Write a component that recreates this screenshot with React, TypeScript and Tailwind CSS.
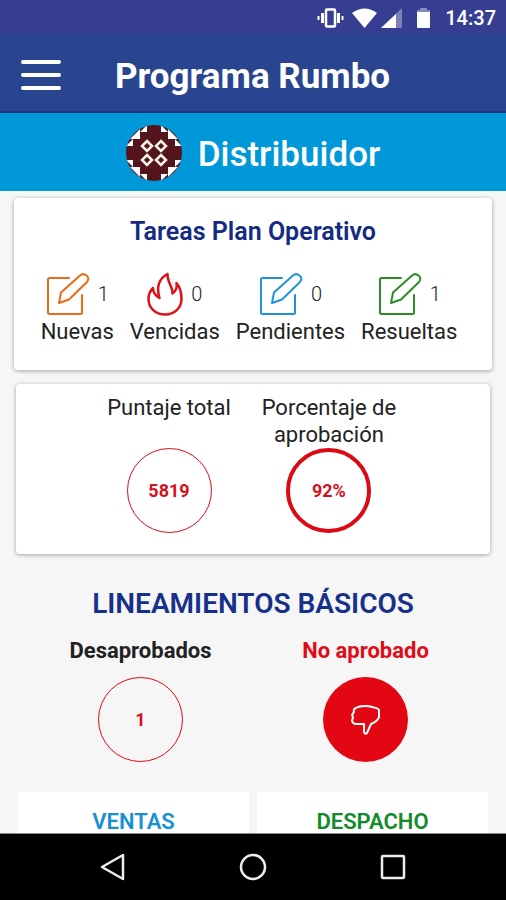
import type { ReactNode } from "react";

function EditIcon() {
  return (
    <svg width="44" height="44" viewBox="0 0 44 44" fill="none" stroke="currentColor" strokeWidth="2" strokeLinecap="round" strokeLinejoin="round" aria-hidden="true">
      <path d="M23 6H3.500Q2 6 2 7.500V40.500Q2 42 3.500 42H34.500Q36 42 36 40.500V23" />
      <path d="M13 31L15 20.500L34 3.500C38 0 45 5 41 10L23 27.500Z" />
    </svg>
  );
}

function FlameIcon() {
  return (
    <svg width="36" height="44" viewBox="0 0 36 44" fill="none" stroke="currentColor" strokeWidth="2.500" strokeLinejoin="round" aria-hidden="true">
      <path d="M20.500 2C13 6 9 14 12.500 26C9 24 6 21 6 16C3 19 1.500 22 1.500 27C1.500 36 8.500 42.500 18 42.500C27.500 42.500 34.500 36 34.500 27C34.500 20 33 15 29.500 11C30.500 16 29 19 25.500 21.500C26 15 20 10 20.500 2Z" />
    </svg>
  );
}

function ThumbDownIcon() {
  return (
    <svg width="30" height="30" viewBox="0 0 30 30" fill="none" stroke="white" strokeWidth="2" strokeLinecap="round" strokeLinejoin="round" aria-label="No aprobado">
      <path d="M5 3Q8 1 14 1Q19 1 21 2Q27 3 28 5V12Q27 16 20 19L16 28Q14 30 13 27L13 19H5Q2 19 1 16L2 12L1 10L3 7Q2 4 5 3Z" />
    </svg>
  );
}

const quarterTurns = [0, 90, 180, 270];

function Avatar() {
  return (
    <svg className="rounded-full" width="56" height="56" viewBox="0 0 56 56" aria-label="Distribuidor">
      <rect width="56" height="56" fill="#53141b" />
      {quarterTurns.map((angle) => (
        <g key={angle} fill="white" transform={`rotate(${angle} 28 28)`}>
          <path d="M14 7L21 0V7ZM35 0V7H42ZM4 14L14 4V14Z" />
        </g>
      ))}
      <g fill="none" stroke="#fff4ea" strokeWidth="2.500">
        <path d="M21 16L26 21L21 26L16 21ZM35 16L40 21L35 26L30 21ZM21 30L26 35L21 40L16 35ZM35 30L40 35L35 40L30 35Z" />
      </g>
    </svg>
  );
}

function StatusBar() {
  return (
    <div className="flex h-[35px] shrink-0 items-center justify-end bg-[#363e92] pr-2.5 text-white">
      <svg width="27" height="20" viewBox="0 0 27 20" fill="none" stroke="currentColor" aria-hidden="true">
        <rect x="9" y="1.500" width="9" height="17" rx="1" strokeWidth="2.500" />
        <path d="M5.500 5V15M21.500 5V15" strokeWidth="3" />
        <path d="M1.500 8V12M25.500 8V12" strokeWidth="2" />
      </svg>
      <svg className="ml-2" width="25" height="20" viewBox="0 0 25 20" fill="currentColor" aria-hidden="true">
        <path d="M0 5Q12.500 -4 25 5L12.500 20Z" />
      </svg>
      <svg className="ml-1" width="21" height="20" viewBox="0 0 21 20" fill="currentColor" aria-hidden="true">
        <path d="M0 20L21 0V20Z" opacity=".35" />
        <path d="M0 20L15 6V20Z" />
      </svg>
      <svg className="ml-3.5" width="15" height="20" viewBox="0 0 15 20" fill="currentColor" aria-hidden="true">
        <path d="M4 0H11V2H14V5H1V2H4Z" opacity=".4" />
        <path d="M1 4H14V19Q14 20 13 20H2Q1 20 1 19Z" />
      </svg>
      <span className="ml-3.5 text-[20px] leading-6 font-medium">14:37</span>
    </div>
  );
}

function Task({ icon, color, count, label }: { icon: ReactNode; color: string; count: number; label: string }) {
  return (
    <li className="flex flex-col items-center gap-0.5">
      <div className="flex items-center gap-2">
        <span className={color}>{icon}</span>
        <span className="text-[20px] leading-6 font-light">{count}</span>
      </div>
      <span className="text-[22px] leading-7">{label}</span>
    </li>
  );
}

function Ring({ border, children }: { border: string; children: ReactNode }) {
  return (
    <div className={`flex size-[85px] items-center justify-center rounded-full border-[#dc0a14] text-[18px] leading-7 font-bold text-[#d8101c] ${border}`}>
      {children}
    </div>
  );
}

export default function App() {
  return (
    <div className="flex h-screen flex-col bg-[#f6f6f6] font-['Roboto',sans-serif] text-[#222]">
      <StatusBar />
      <header className="flex h-[78px] shrink-0 items-center border-b-2 border-[#20357c] bg-[#29458f] pt-1 pl-[21px] text-white">
        <button type="button" aria-label="Menú" className="flex w-10 flex-col gap-[9px]">
          <span className="h-1 rounded-full bg-white" />
          <span className="h-1 rounded-full bg-white" />
          <span className="h-1 rounded-full bg-white" />
        </button>
        <h1 className="ml-[54px] pt-1 text-[35px] leading-10 font-bold">Programa Rumbo</h1>
      </header>
      <div className="flex h-[78px] shrink-0 items-center justify-center gap-4 bg-[#0098d8] pt-0.5 text-white">
        <Avatar />
        <h2 className="pt-1 text-[35px] leading-10 font-medium">Distribuidor</h2>
      </div>

      <main className="min-h-0 flex-1 overflow-hidden pt-[7px]">
        <section className="mx-3.5 h-[172px] rounded-sm bg-white pt-[18px] shadow-[0_1px_4px_rgba(0,0,0,0.35)]">
          <h3 className="text-center text-[25px] leading-8 font-semibold text-[#142a83]">Tareas Plan Operativo</h3>
          <ul className="mt-6 flex justify-center gap-4 pr-2">
            <Task icon={<EditIcon />} color="text-[#ea6a16]" count={1} label="Nuevas" />
            <Task icon={<FlameIcon />} color="text-[#dd101b]" count={0} label="Vencidas" />
            <Task icon={<EditIcon />} color="text-[#1f93d8]" count={0} label="Pendientes" />
            <Task icon={<EditIcon />} color="text-[#2d8c26]" count={1} label="Resueltas" />
          </ul>
        </section>

        <section className="mx-4 mt-3.5 flex h-[170px] justify-center gap-7 rounded-sm bg-white pt-[10px] shadow-[0_1px_4px_rgba(0,0,0,0.35)]">
          <div className="flex flex-col items-center justify-between pb-[21px] text-[22px] leading-[27px]">
            <span>Puntaje total</span>
            <Ring border="border">5819</Ring>
          </div>
          <div className="flex w-[140px] flex-col items-center justify-between pb-[21px] text-center text-[22px] leading-[27px]">
            <span>Porcentaje de aprobación</span>
            <Ring border="border-4">92%</Ring>
          </div>
        </section>

        <h3 className="mt-[34px] text-center text-[28px] leading-8 font-semibold text-[#16318a]">LINEAMIENTOS BÁSICOS</h3>
        <div className="mt-[17px] grid grid-cols-2 px-7 text-[22px] leading-7 font-bold">
          <div className="flex flex-col items-center gap-3">
            <span>Desaprobados</span>
            <Ring border="border">1</Ring>
          </div>
          <div className="flex flex-col items-center gap-3 text-[#e20a17]">
            <span>No aprobado</span>
            <div className="flex size-[85px] items-center justify-center rounded-full bg-[#e30613]">
              <ThumbDownIcon />
            </div>
          </div>
        </div>

        <div className="mt-[30px] grid grid-cols-2 gap-2 px-[18px] text-center text-[22px] leading-7 font-semibold">
          <section className="bg-white pt-4 pb-8 text-[#1a8fd3]">
            <h4>VENTAS</h4>
          </section>
          <section className="bg-white pt-4 pb-8 text-[#118c28]">
            <h4>DESPACHO</h4>
          </section>
        </div>
      </main>

      <nav className="flex h-[67px] shrink-0 items-center justify-center gap-28 border-t border-[#888] bg-black text-[#eee]">
        <button type="button" aria-label="Atrás">
          <svg width="28" height="28" viewBox="0 0 28 28" fill="none" stroke="currentColor" strokeWidth="2.500" strokeLinejoin="round">
            <path d="M24 2V26L3 14Z" />
          </svg>
        </button>
        <button type="button" aria-label="Inicio">
          <svg width="28" height="28" viewBox="0 0 28 28" fill="none" stroke="currentColor" strokeWidth="2.500">
            <circle cx="14" cy="14" r="12" />
          </svg>
        </button>
        <button type="button" aria-label="Recientes">
          <svg width="28" height="28" viewBox="0 0 28 28" fill="none" stroke="currentColor" strokeWidth="2.500">
            <rect x="3" y="3" width="22" height="22" rx="1" />
          </svg>
        </button>
      </nav>
    </div>
  );
}
